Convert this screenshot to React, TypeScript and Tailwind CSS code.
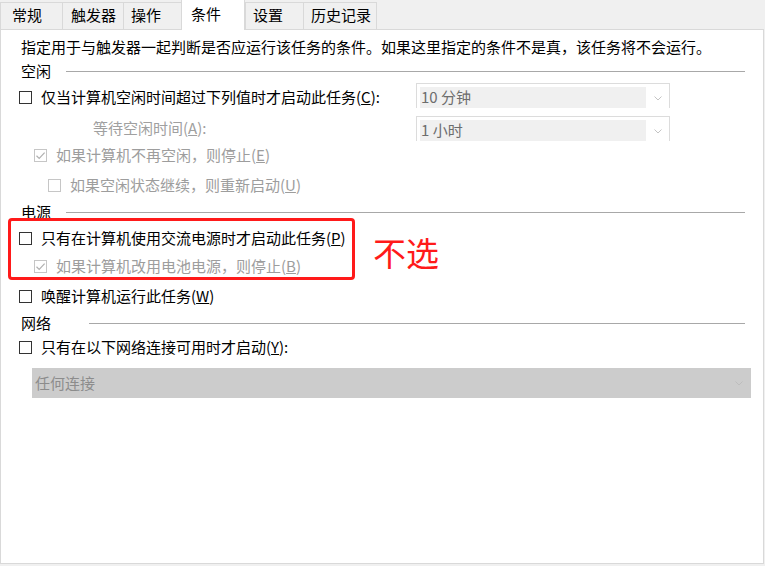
import React from "react";

const font = { fontFamily: '"Noto Sans CJK SC", "Noto Sans", sans-serif' };

type BoxProps = { checked?: boolean; disabled?: boolean };

function CheckBox({ checked, disabled }: BoxProps) {
  return (
    <span
      className={`flex h-[13px] w-[13px] shrink-0 items-center justify-center border bg-white ${
        disabled ? "border-[#c6c6c6]" : "border-[#333333]"
      }`}
    >
      {checked && (
        <svg width="11" height="11" viewBox="0 0 11 11">
          <path d="M1.5 5.8 L4.2 8.4 L9.6 2.6" fill="none" stroke={disabled ? "#b0b0b0" : "#222"} strokeWidth="1.2" />
        </svg>
      )}
    </span>
  );
}

function Chevron({ color = "#c4c4c4" }: { color?: string }) {
  return (
    <svg width="8" height="5" viewBox="0 0 8 5">
      <path d="M0.5 0.5 L4 4 L7.5 0.5" fill="none" stroke={color} strokeWidth="1" />
    </svg>
  );
}

function SmallSelect({ value }: { value: string }) {
  return (
    <div className="flex h-[25px] w-[254px] items-start border-x border-t border-[#dcdcdc] bg-white pl-[3px] pt-[3px]">
      <div className="flex h-[21px] w-[226px] items-center bg-[#f0f0f0] pl-[1px] text-[15px] text-[#6d6d6d]">{value}</div>
      <div className="flex flex-1 items-center justify-center pt-[9px]">
        <Chevron />
      </div>
    </div>
  );
}

function Section({ title, lineLeft }: { title: string; lineLeft: string }) {
  return (
    <div className="flex h-[24px] items-center pl-[20px] pr-[18px] text-[15px] text-black">
      <span>{title}</span>
      <div className={`h-px flex-1 bg-[#a8a8a8] ${lineLeft}`} />
    </div>
  );
}

function Row({ children, indent, h, grey }: { children: React.ReactNode; indent: string; h: string; grey?: boolean }) {
  return (
    <div className={`flex items-center gap-[9px] text-[15px] ${indent} ${h} ${grey ? "text-[#9d9d9d]" : "text-black"}`}>
      {children}
    </div>
  );
}

const tabs = [
  { label: "常规", w: "w-[62px]", pl: "pl-[11px]" },
  { label: "触发器", w: "w-[61px]", pl: "pl-[8px]" },
  { label: "操作", w: "w-[58px]", pl: "pl-[7px]" },
  { label: "条件", w: "w-[64px]", pl: "pl-[9px]", active: true },
  { label: "设置", w: "w-[58px]", pl: "pl-[7px]" },
  { label: "历史记录", w: "w-[74px]", pl: "pl-[7px]" },
];

export default function App() {
  return (
    <div className="h-[566px] w-[765px] overflow-hidden bg-[#f0f0f0]" style={font}>
      {/* tab strip */}
      <div className="flex h-[29px] items-end">
        {tabs.map((t) =>
          t.active ? (
            <div
              key={t.label}
              className={`relative z-10 -mb-px flex h-[30px] items-start border-x border-[#d9d9d9] bg-white pt-[3px] text-[15px] text-black ${t.w} ${t.pl}`}
            >
              {t.label}
            </div>
          ) : (
            <div
              key={t.label}
              className={`flex h-[27px] items-center border-l border-t border-[#d9d9d9] bg-[#f0f0f0] pb-[1px] text-[15px] text-black last:border-r ${t.w} ${t.pl}`}
            >
              {t.label}
            </div>
          )
        )}
      </div>

      {/* panel */}
      <div className="h-[535px] w-[764px] border border-[#d9d9d9] bg-white pt-[7px]">
        <div className="flex h-[21px] items-center pl-[20px] text-[15px] text-black">
          指定用于与触发器一起判断是否应运行该任务的条件。如果这里指定的条件不是真，该任务将不会运行。
        </div>
        <div className="mt-[1px]">
          <Section title="空闲" lineLeft="ml-[15px]" />
        </div>

        <div className="flex h-[28px] items-start pl-[18px]">
          <div className="flex h-[28px] w-[397px] items-center gap-[9px] text-[15px] text-black">
            <CheckBox />
            <span>
              仅当计算机空闲时间超过下列值时才启动此任务(<span className="underline">C</span>):
            </span>
          </div>
          <SmallSelect value="10 分钟" />
        </div>

        <div className="mt-[5px] flex h-[25px] items-start">
          <div className="flex h-[25px] w-[415px] items-center pl-[92px] text-[15px] text-[#a0a0a0]">
            <span>
              等待空闲时间(<span className="underline">A</span>):
            </span>
          </div>
          <SmallSelect value="1 小时" />
        </div>

        <Row indent="pl-[33px]" h="h-[29px]" grey>
          <CheckBox checked disabled />
          <span>
            如果计算机不再空闲，则停止(<span className="underline">E</span>)
          </span>
        </Row>
        <Row indent="pl-[47px]" h="h-[30px]" grey>
          <CheckBox disabled />
          <span>
            如果空闲状态继续，则重新启动(<span className="underline">U</span>)
          </span>
        </Row>

        <Section title="电源" lineLeft="ml-[15px]" />

        <div className="relative">
          <Row indent="pl-[18px]" h="h-[28px]">
            <CheckBox />
            <span>
              只有在计算机使用交流电源时才启动此任务(<span className="underline">P</span>)
            </span>
          </Row>
          <Row indent="pl-[33px]" h="h-[29px]" grey>
            <CheckBox checked disabled />
            <span>
              如果计算机改用电池电源，则停止(<span className="underline">B</span>)
            </span>
          </Row>
          {/* annotation */}
          <div className="pointer-events-none absolute bottom-[1px] left-[7px] top-[-6px] w-[347px] rounded-[4px] border-[3px] border-[#ff1a1a]" />
          <div className="absolute left-[372px] top-[12px] text-[33px] leading-none text-[#ff1a1a]">不选</div>
        </div>

        <Row indent="pl-[18px]" h="h-[30px]">
          <CheckBox />
          <span>
            唤醒计算机运行此任务(<span className="underline">W</span>)
          </span>
        </Row>

        <Section title="网络" lineLeft="ml-[38px]" />

        <Row indent="pl-[18px]" h="h-[24px]">
          <CheckBox />
          <span>
            只有在以下网络连接可用时才启动(<span className="underline">Y</span>):
          </span>
        </Row>

        <div className="ml-[31px] mt-[9px] flex h-[30px] w-[719px] items-center justify-between bg-[#cccccc] pl-[3px] pr-[8px] text-[15px] text-[#8c8c8c]">
          <span>任何连接</span>
          <Chevron color="#bdbdbd" />
        </div>
      </div>
    </div>
  );
}
